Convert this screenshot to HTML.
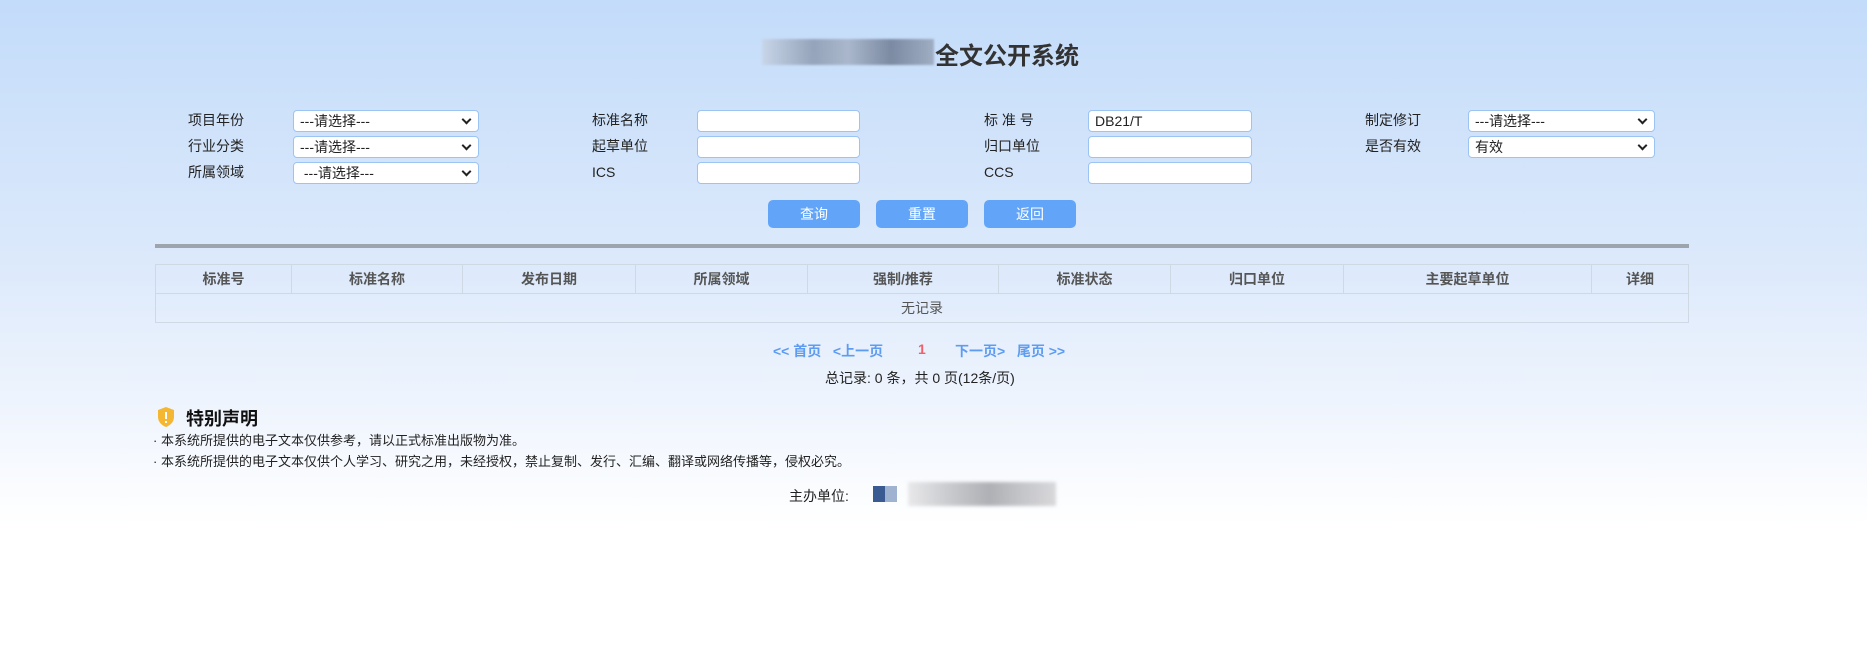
<!DOCTYPE html>
<html><head><meta charset="utf-8"><style>
*{margin:0;padding:0;box-sizing:border-box}
body{width:1867px;height:664px;overflow:hidden;position:relative;font-family:"Liberation Sans","Noto Sans CJK SC",sans-serif;font-size:14px;color:#222;background:linear-gradient(#c3dcfa 0px,#dce9fb 260px,#eef4fd 400px,#fff 525px,#fff 664px)}
.a{position:absolute;white-space:nowrap}
.lbl{line-height:21px}
.sel,.inp{position:absolute;height:22px;background:#fff;border:1px solid #9cc4f2;border-radius:4px;font-size:14px;line-height:20px;padding-left:6px}
.sel:after{content:"";position:absolute;right:8px;top:5px;width:5px;height:5px;border-right:2px solid #222;border-bottom:2px solid #222;transform:rotate(45deg)}
.btn{position:absolute;top:200px;height:28px;width:92px;background:#62a5f8;border-radius:5px;color:#fff;text-align:center;line-height:28px;font-size:14px}
table{position:absolute;left:155px;top:264px;width:1534px;border-collapse:collapse;font-size:14px}
td,th{border:1px solid #cfd9e4;height:29px;text-align:center;color:#555}
th{font-weight:bold}
.pg{color:#5d9cf0;font-weight:bold}
</style></head><body>
<div class="a" style="left:762px;top:39px;width:172px;height:26px;background:linear-gradient(90deg,#c8d4e6,#8d9ab0 30%,#a5b1c4 50%,#6f7c94 75%,#99a6ba);filter:blur(1px);opacity:.85"></div>
<div class="a" style="left:935px;top:36px;font-size:24px;font-weight:bold;color:#333">全文公开系统</div>

<div class="a lbl" style="left:188px;top:110px">项目年份</div>
<div class="a lbl" style="left:188px;top:136px">行业分类</div>
<div class="a lbl" style="left:188px;top:162px">所属领域</div>
<div class="sel" style="left:293px;top:110px;width:186px">---请选择---</div>
<div class="sel" style="left:293px;top:136px;width:186px">---请选择---</div>
<div class="sel" style="left:293px;top:162px;width:186px">&nbsp;---请选择---</div>

<div class="a lbl" style="left:592px;top:110px">标准名称</div>
<div class="a lbl" style="left:592px;top:136px">起草单位</div>
<div class="a lbl" style="left:592px;top:162px">ICS</div>
<div class="inp" style="left:697px;top:110px;width:163px"></div>
<div class="inp" style="left:697px;top:136px;width:163px"></div>
<div class="inp" style="left:697px;top:162px;width:163px"></div>

<div class="a lbl" style="left:984px;top:110px">标 准 号</div>
<div class="a lbl" style="left:984px;top:136px">归口单位</div>
<div class="a lbl" style="left:984px;top:162px">CCS</div>
<div class="inp" style="left:1088px;top:110px;width:164px">DB21/T</div>
<div class="inp" style="left:1088px;top:136px;width:164px"></div>
<div class="inp" style="left:1088px;top:162px;width:164px"></div>

<div class="a lbl" style="left:1365px;top:110px">制定修订</div>
<div class="a lbl" style="left:1365px;top:136px">是否有效</div>
<div class="sel" style="left:1468px;top:110px;width:187px">---请选择---</div>
<div class="sel" style="left:1468px;top:136px;width:187px">有效</div>

<div class="btn" style="left:768px">查询</div>
<div class="btn" style="left:876px">重置</div>
<div class="btn" style="left:984px">返回</div>

<div class="a" style="left:155px;top:244px;width:1534px;height:4px;background:#9ea4ab"></div>

<table>
<tr><th style="width:136px">标准号</th><th style="width:171px">标准名称</th><th style="width:173px">发布日期</th><th style="width:172px">所属领域</th><th style="width:191px">强制/推荐</th><th style="width:172px">标准状态</th><th style="width:173px">归口单位</th><th style="width:248px">主要起草单位</th><th>详细</th></tr>
<tr><td colspan="9">无记录</td></tr>
</table>

<div class="a pg" style="left:773px;top:341px">&lt;&lt; 首页&nbsp;&nbsp; &lt;上一页</div>
<div class="a" style="left:918px;top:341px;color:#f0606a;font-weight:bold">1</div>
<div class="a pg" style="left:955px;top:341px">下一页&gt;&nbsp;&nbsp; 尾页 &gt;&gt;</div>
<div class="a" style="left:825px;top:368px">总记录: 0 条，共 0 页(12条/页)</div>

<svg class="a" style="left:157px;top:406px" width="18" height="22" viewBox="0 0 18 22"><path d="M9 1 L17 4 V11 C17 16 13 19.5 9 21 C5 19.5 1 16 1 11 V4 Z" fill="#f5b731"/><rect x="8" y="6" width="2" height="7" fill="#fff"/><rect x="8" y="15" width="2" height="2" fill="#fff"/></svg>
<div class="a" style="left:186px;top:405px;font-size:18px;font-weight:bold;color:#111">特别声明</div>
<div class="a" style="left:153px;top:430px;font-size:13px">· 本系统所提供的电子文本仅供参考，请以正式标准出版物为准。</div>
<div class="a" style="left:153px;top:451px;font-size:13px">· 本系统所提供的电子文本仅供个人学习、研究之用，未经授权，禁止复制、发行、汇编、翻译或网络传播等，侵权必究。</div>

<div class="a" style="left:789px;top:486px">主办单位:</div>
<div class="a" style="left:873px;top:486px;width:24px;height:16px;background:linear-gradient(90deg,#3a5a92 50%,#9fb2d0 50%)"></div>
<div class="a" style="left:908px;top:482px;width:148px;height:24px;background:linear-gradient(90deg,#e4e4e6,#bbbcc0 30%,#9c9ea3 55%,#b5b6ba 75%,#d0d0d3);filter:blur(1.5px);opacity:.8"></div>
</body></html>
